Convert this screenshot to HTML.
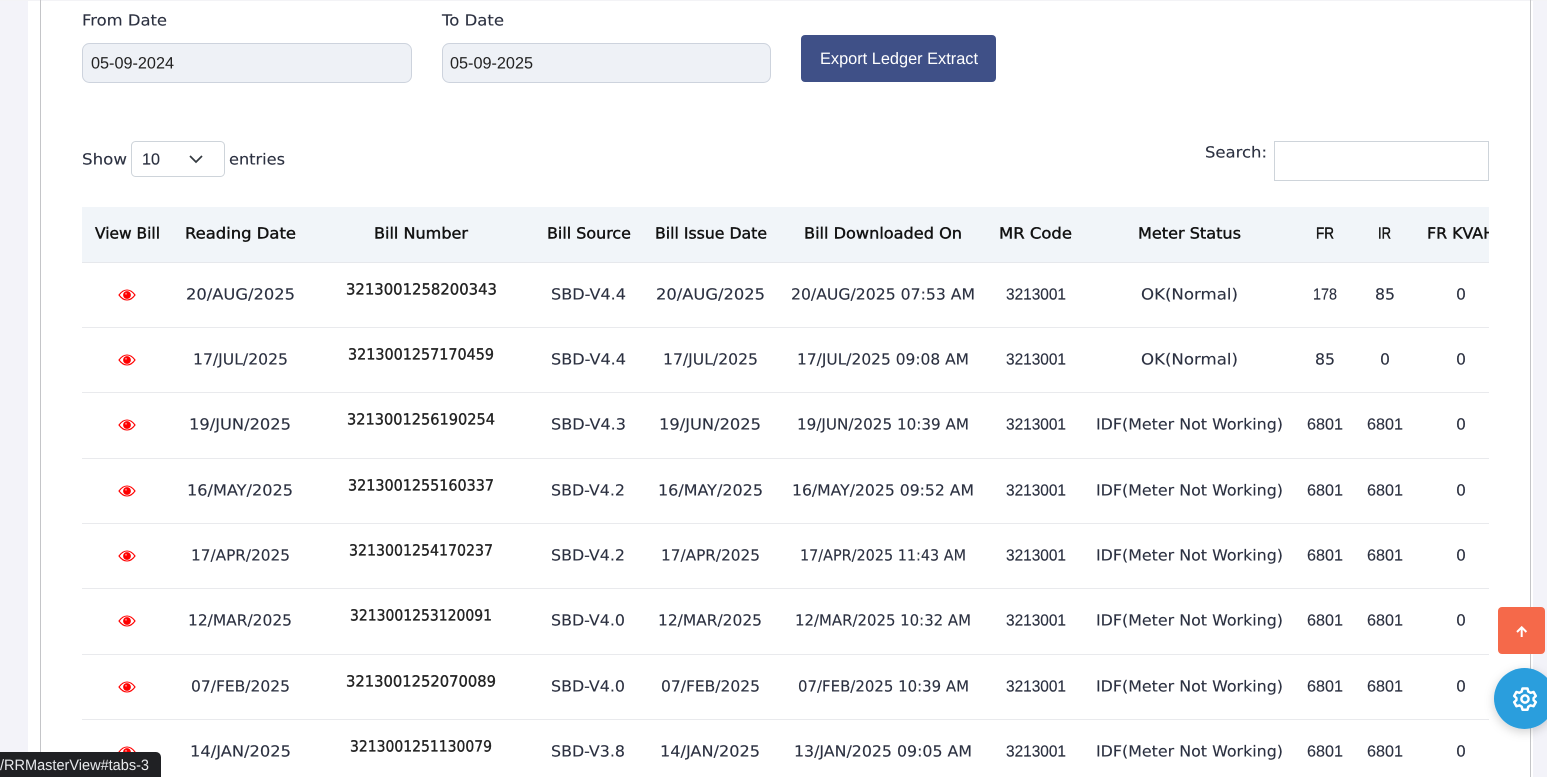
<!DOCTYPE html>
<html lang="en"><head><meta charset="utf-8"><title>Ledger</title>
<style>
html,body{margin:0;padding:0;width:1547px;height:777px;overflow:hidden;background:#fff}
svg{display:block}
text{font-family:"DejaVu Sans","Liberation Sans",sans-serif;font-size:15.3px;fill:#2b3040;text-rendering:geometricPrecision;stroke:#2b3040;stroke-width:.12px}
.h text{fill:#111;stroke:#111;stroke-width:.4px}
.n text{fill:#222;stroke:#222;stroke-width:.35px}
text.d{font-family:"Liberation Sans",Arial,sans-serif;font-size:16px;stroke-width:.15px}
.h text.d{stroke-width:.4px}
text.ar{font-family:"Liberation Sans",Arial,sans-serif;font-size:16.500px;fill:#222;stroke:none}
text.w{fill:#fff}
text.tip{font-family:"Liberation Sans",Arial,sans-serif;font-size:15px;fill:#e8eaed;stroke:none}
</style></head><body>
<svg width="1547" height="777" viewBox="0 0 1547 777" xmlns="http://www.w3.org/2000/svg">
<defs>
<clipPath id="tc"><rect x="82" y="200" width="1407" height="577"/></clipPath>
<filter id="sh" x="-30%" y="-30%" width="160%" height="160%"><feDropShadow dx="0" dy="3" stdDeviation="5" flood-color="#000" flood-opacity=".18"/></filter>
<g id="eye"><path d="M-8 0C-5-4.200-2.500-5 0-5S5-4.200 8 0C5 4.200 2.500 5 0 5S-5 4.200-8 0Z" fill="none" stroke="#f00" stroke-width="1.100"/><circle r="3.900" fill="#f00"/><circle cx="-1" cy="-1.200" r="1" fill="#ff7a7a"/></g>
</defs>
<rect width="1547" height="777" fill="#fff"/>
<rect width="28" height="777" fill="#f3f3f9"/>
<rect x="1533" width="14" height="777" fill="#f3f3f9"/>
<rect width="1547" height="1" fill="#f3f3f6"/>
<rect x="40" width="1" height="777" fill="#c4c5c8"/>
<rect x="1530" width="1" height="777" fill="#c4c5c8"/>

<text x="82" y="25.500" textLength="85" lengthAdjust="spacingAndGlyphs">From Date</text>
<text x="442" y="25.500" textLength="62" lengthAdjust="spacingAndGlyphs">To Date</text>
<rect x="82.500" y="43.500" width="329" height="39" rx="7" fill="#eef1f6" stroke="#cdd3dd"/>
<rect x="442.500" y="43.500" width="328" height="39" rx="7" fill="#eef1f6" stroke="#cdd3dd"/>
<text class="ar" x="91" y="68.500" textLength="83" lengthAdjust="spacingAndGlyphs">05-09-2024</text>
<text class="ar" x="450" y="68.500" textLength="83" lengthAdjust="spacingAndGlyphs">05-09-2025</text>
<rect x="801" y="35" width="195" height="47" rx="4" fill="#3f5087"/>
<text class="ar w" x="820" y="64" textLength="158" lengthAdjust="spacingAndGlyphs">Export Ledger Extract</text>

<text x="82" y="164.500" textLength="45" lengthAdjust="spacingAndGlyphs">Show</text>
<rect x="131.500" y="141.500" width="93" height="35" rx="4" fill="#fff" stroke="#ced4da"/>
<text class="d" x="142" y="164.500" textLength="18" lengthAdjust="spacingAndGlyphs">10</text>
<path d="M190 156l6 6 6-6" fill="none" stroke="#343a40" stroke-width="1.700"/>
<text x="229" y="164.500" textLength="56" lengthAdjust="spacingAndGlyphs">entries</text>
<text x="1205" y="157.500" textLength="62" lengthAdjust="spacingAndGlyphs">Search:</text>
<rect x="1274.500" y="141.500" width="214" height="39" fill="#fff" stroke="#ced4da"/>

<g clip-path="url(#tc)">
<rect x="82" y="207" width="1407" height="55" fill="#f1f5f9"/>
<rect x="82" y="262" width="1407" height="1" fill="#e6e8ec"/>
<g fill="#e9eaed">
<rect x="82" y="327" width="1407" height="1"/><rect x="82" y="392" width="1407" height="1"/><rect x="82" y="458" width="1407" height="1"/><rect x="82" y="523" width="1407" height="1"/><rect x="82" y="588" width="1407" height="1"/><rect x="82" y="654" width="1407" height="1"/><rect x="82" y="719" width="1407" height="1"/>
</g>
<g class="h">
<text x="95" y="238.500" textLength="65" lengthAdjust="spacingAndGlyphs">View Bill</text>
<text x="185" y="238.500" textLength="111" lengthAdjust="spacingAndGlyphs">Reading Date</text>
<text x="374" y="238.500" textLength="94" lengthAdjust="spacingAndGlyphs">Bill Number</text>
<text x="547" y="238.500" textLength="84" lengthAdjust="spacingAndGlyphs">Bill Source</text>
<text x="655" y="238.500" textLength="112" lengthAdjust="spacingAndGlyphs">Bill Issue Date</text>
<text x="804" y="238.500" textLength="158" lengthAdjust="spacingAndGlyphs">Bill Downloaded On</text>
<text x="999" y="238.500" textLength="73" lengthAdjust="spacingAndGlyphs">MR Code</text>
<text x="1138" y="238.500" textLength="103" lengthAdjust="spacingAndGlyphs">Meter Status</text>
<text class="d" x="1316" y="238.500" textLength="18" lengthAdjust="spacingAndGlyphs">FR</text>
<text class="d" x="1378" y="238.500" textLength="13" lengthAdjust="spacingAndGlyphs">IR</text>
<text x="1427" y="238.500" textLength="68" lengthAdjust="spacingAndGlyphs">FR KVAH</text>
</g>

<use href="#eye" x="127" y="295"/><use href="#eye" x="127" y="360"/><use href="#eye" x="127" y="425"/><use href="#eye" x="127" y="491"/><use href="#eye" x="127" y="556"/><use href="#eye" x="127" y="621"/><use href="#eye" x="127" y="687"/><use href="#eye" x="127" y="752"/>

<g class="n">
<text x="346" y="294.500" textLength="151" lengthAdjust="spacingAndGlyphs">3213001258200343</text>
<text x="348" y="359.500" textLength="146" lengthAdjust="spacingAndGlyphs">3213001257170459</text>
<text x="347" y="424.500" textLength="148" lengthAdjust="spacingAndGlyphs">3213001256190254</text>
<text x="348" y="490.500" textLength="146" lengthAdjust="spacingAndGlyphs">3213001255160337</text>
<text x="349" y="555.500" textLength="144" lengthAdjust="spacingAndGlyphs">3213001254170237</text>
<text x="350" y="620.500" textLength="142" lengthAdjust="spacingAndGlyphs">3213001253120091</text>
<text x="346" y="686.500" textLength="150" lengthAdjust="spacingAndGlyphs">3213001252070089</text>
<text x="350" y="751.500" textLength="142" lengthAdjust="spacingAndGlyphs">3213001251130079</text>
</g>

<g>
<text x="186" y="299.500" textLength="109" lengthAdjust="spacingAndGlyphs">20/AUG/2025</text>
<text x="551" y="299.500" textLength="75" lengthAdjust="spacingAndGlyphs">SBD-V4.4</text>
<text x="656" y="299.500" textLength="109" lengthAdjust="spacingAndGlyphs">20/AUG/2025</text>
<text x="791" y="299.500" textLength="184" lengthAdjust="spacingAndGlyphs">20/AUG/2025 07:53 AM</text>
<text class="d" x="1006" y="299.500" textLength="60" lengthAdjust="spacingAndGlyphs">3213001</text>
<text x="1141" y="299.500" textLength="97" lengthAdjust="spacingAndGlyphs">OK(Normal)</text>
<text class="d" x="1313" y="299.500" textLength="24" lengthAdjust="spacingAndGlyphs">178</text>
<text x="1375" y="299.500" textLength="20" lengthAdjust="spacingAndGlyphs">85</text>
<text x="1456" y="299.500" textLength="10" lengthAdjust="spacingAndGlyphs">0</text>

<text x="193" y="364.500" textLength="95" lengthAdjust="spacingAndGlyphs">17/JUL/2025</text>
<text x="551" y="364.500" textLength="75" lengthAdjust="spacingAndGlyphs">SBD-V4.4</text>
<text x="663" y="364.500" textLength="95" lengthAdjust="spacingAndGlyphs">17/JUL/2025</text>
<text x="797" y="364.500" textLength="172" lengthAdjust="spacingAndGlyphs">17/JUL/2025 09:08 AM</text>
<text class="d" x="1006" y="364.500" textLength="60" lengthAdjust="spacingAndGlyphs">3213001</text>
<text x="1141" y="364.500" textLength="97" lengthAdjust="spacingAndGlyphs">OK(Normal)</text>
<text x="1315" y="364.500" textLength="20" lengthAdjust="spacingAndGlyphs">85</text>
<text x="1380" y="364.500" textLength="10" lengthAdjust="spacingAndGlyphs">0</text>
<text x="1456" y="364.500" textLength="10" lengthAdjust="spacingAndGlyphs">0</text>

<text x="189" y="429.500" textLength="102" lengthAdjust="spacingAndGlyphs">19/JUN/2025</text>
<text x="551" y="429.500" textLength="75" lengthAdjust="spacingAndGlyphs">SBD-V4.3</text>
<text x="659" y="429.500" textLength="102" lengthAdjust="spacingAndGlyphs">19/JUN/2025</text>
<text x="797" y="429.500" textLength="172" lengthAdjust="spacingAndGlyphs">19/JUN/2025 10:39 AM</text>
<text class="d" x="1006" y="429.500" textLength="60" lengthAdjust="spacingAndGlyphs">3213001</text>
<text x="1096" y="429.500" textLength="187" lengthAdjust="spacingAndGlyphs">IDF(Meter Not Working)</text>
<text class="d" x="1307" y="429.500" textLength="36" lengthAdjust="spacingAndGlyphs">6801</text>
<text class="d" x="1367" y="429.500" textLength="36" lengthAdjust="spacingAndGlyphs">6801</text>
<text x="1456" y="429.500" textLength="10" lengthAdjust="spacingAndGlyphs">0</text>

<text x="187" y="495.500" textLength="106" lengthAdjust="spacingAndGlyphs">16/MAY/2025</text>
<text x="551" y="495.500" textLength="74" lengthAdjust="spacingAndGlyphs">SBD-V4.2</text>
<text x="658" y="495.500" textLength="105" lengthAdjust="spacingAndGlyphs">16/MAY/2025</text>
<text x="792" y="495.500" textLength="182" lengthAdjust="spacingAndGlyphs">16/MAY/2025 09:52 AM</text>
<text class="d" x="1006" y="495.500" textLength="60" lengthAdjust="spacingAndGlyphs">3213001</text>
<text x="1096" y="495.500" textLength="187" lengthAdjust="spacingAndGlyphs">IDF(Meter Not Working)</text>
<text class="d" x="1307" y="495.500" textLength="36" lengthAdjust="spacingAndGlyphs">6801</text>
<text class="d" x="1367" y="495.500" textLength="36" lengthAdjust="spacingAndGlyphs">6801</text>
<text x="1456" y="495.500" textLength="10" lengthAdjust="spacingAndGlyphs">0</text>

<text x="191" y="560.500" textLength="99" lengthAdjust="spacingAndGlyphs">17/APR/2025</text>
<text x="551" y="560.500" textLength="74" lengthAdjust="spacingAndGlyphs">SBD-V4.2</text>
<text x="661" y="560.500" textLength="99" lengthAdjust="spacingAndGlyphs">17/APR/2025</text>
<text x="800" y="560.500" textLength="166" lengthAdjust="spacingAndGlyphs">17/APR/2025 11:43 AM</text>
<text class="d" x="1006" y="560.500" textLength="60" lengthAdjust="spacingAndGlyphs">3213001</text>
<text x="1096" y="560.500" textLength="187" lengthAdjust="spacingAndGlyphs">IDF(Meter Not Working)</text>
<text class="d" x="1307" y="560.500" textLength="36" lengthAdjust="spacingAndGlyphs">6801</text>
<text class="d" x="1367" y="560.500" textLength="36" lengthAdjust="spacingAndGlyphs">6801</text>
<text x="1456" y="560.500" textLength="10" lengthAdjust="spacingAndGlyphs">0</text>

<text x="188" y="625.500" textLength="104" lengthAdjust="spacingAndGlyphs">12/MAR/2025</text>
<text x="551" y="625.500" textLength="74" lengthAdjust="spacingAndGlyphs">SBD-V4.0</text>
<text x="658" y="625.500" textLength="104" lengthAdjust="spacingAndGlyphs">12/MAR/2025</text>
<text x="795" y="625.500" textLength="176" lengthAdjust="spacingAndGlyphs">12/MAR/2025 10:32 AM</text>
<text class="d" x="1006" y="625.500" textLength="60" lengthAdjust="spacingAndGlyphs">3213001</text>
<text x="1096" y="625.500" textLength="187" lengthAdjust="spacingAndGlyphs">IDF(Meter Not Working)</text>
<text class="d" x="1307" y="625.500" textLength="36" lengthAdjust="spacingAndGlyphs">6801</text>
<text class="d" x="1367" y="625.500" textLength="36" lengthAdjust="spacingAndGlyphs">6801</text>
<text x="1456" y="625.500" textLength="10" lengthAdjust="spacingAndGlyphs">0</text>

<text x="191" y="691.500" textLength="99" lengthAdjust="spacingAndGlyphs">07/FEB/2025</text>
<text x="551" y="691.500" textLength="74" lengthAdjust="spacingAndGlyphs">SBD-V4.0</text>
<text x="661" y="691.500" textLength="99" lengthAdjust="spacingAndGlyphs">07/FEB/2025</text>
<text x="798" y="691.500" textLength="171" lengthAdjust="spacingAndGlyphs">07/FEB/2025 10:39 AM</text>
<text class="d" x="1006" y="691.500" textLength="60" lengthAdjust="spacingAndGlyphs">3213001</text>
<text x="1096" y="691.500" textLength="187" lengthAdjust="spacingAndGlyphs">IDF(Meter Not Working)</text>
<text class="d" x="1307" y="691.500" textLength="36" lengthAdjust="spacingAndGlyphs">6801</text>
<text class="d" x="1367" y="691.500" textLength="36" lengthAdjust="spacingAndGlyphs">6801</text>
<text x="1456" y="691.500" textLength="10" lengthAdjust="spacingAndGlyphs">0</text>

<text x="190" y="756.500" textLength="101" lengthAdjust="spacingAndGlyphs">14/JAN/2025</text>
<text x="551" y="756.500" textLength="74" lengthAdjust="spacingAndGlyphs">SBD-V3.8</text>
<text x="660" y="756.500" textLength="100" lengthAdjust="spacingAndGlyphs">14/JAN/2025</text>
<text x="794" y="756.500" textLength="178" lengthAdjust="spacingAndGlyphs">13/JAN/2025 09:05 AM</text>
<text class="d" x="1006" y="756.500" textLength="60" lengthAdjust="spacingAndGlyphs">3213001</text>
<text x="1096" y="756.500" textLength="187" lengthAdjust="spacingAndGlyphs">IDF(Meter Not Working)</text>
<text class="d" x="1307" y="756.500" textLength="36" lengthAdjust="spacingAndGlyphs">6801</text>
<text class="d" x="1367" y="756.500" textLength="36" lengthAdjust="spacingAndGlyphs">6801</text>
<text x="1456" y="756.500" textLength="10" lengthAdjust="spacingAndGlyphs">0</text>
</g>
</g>

<rect x="1498" y="607" width="47" height="47" rx="4" fill="#f5694a"/>
<path d="M1521.700 637v-9.500M1517 632l4.700-4.700 4.700 4.700" fill="none" stroke="#fff" stroke-width="2"/>

<circle cx="1524.500" cy="698.500" r="30.500" fill="#2a9edd" filter="url(#sh)"/>
<g transform="translate(1525 699)" fill="none" stroke="#fff" stroke-width="2.500" stroke-linejoin="round">
<circle r="3.600"/>
<path d="M-2.500-10.500H2.500L3.300-7.500 5.600-6.200 8.600-7 10.800-3 8.600-0.900V1.100L10.800 3.200 8.600 7.200 5.600 6.400 3.300 7.700 2.500 10.700H-2.500L-3.300 7.700-5.600 6.400-8.600 7.200-10.800 3.200-8.600 1.100V-0.900L-10.800-3-8.600-7-5.600-6.200-3.300-7.500Z"/>
</g>

<path d="M0 752H156a5 5 0 0 1 5 5V777H0Z" fill="#202124"/>
<text class="tip" x="0" y="770" textLength="149" lengthAdjust="spacingAndGlyphs">/RRMasterView#tabs-3</text>
</svg>
</body></html>
